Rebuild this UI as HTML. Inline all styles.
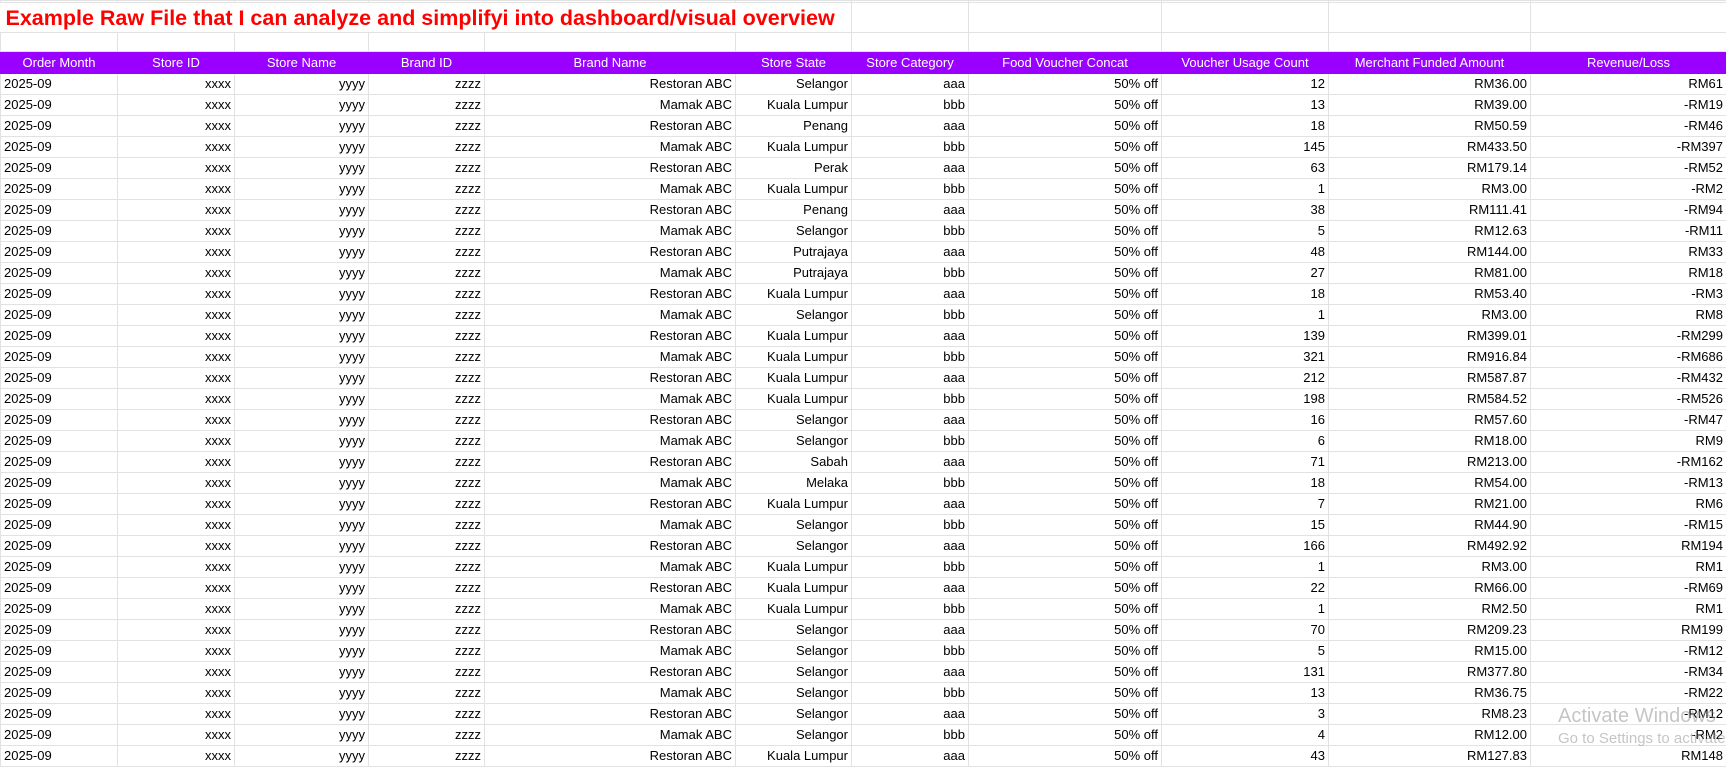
<!DOCTYPE html>
<html><head><meta charset="utf-8"><style>
html,body{margin:0;padding:0;background:#fff;width:1726px;height:755px;overflow:hidden;font-family:"Liberation Sans",Arial,sans-serif;}
table{border-collapse:collapse;table-layout:fixed;width:1726px;position:absolute;left:0;top:0;}
td{border:1px solid #e2e2e2;padding:0 3px;font-size:13px;color:#000;white-space:nowrap;overflow:hidden;text-align:right;height:20px;line-height:20px;}
td:first-child{text-align:left;}
tr.top td{height:1px;line-height:1px;padding:0;}
tr.title td{height:29px;border-left:none;border-right:none;}
tr.title td.t{overflow:visible;text-align:left;font-weight:bold;color:#ff0000;font-size:21.5px;padding-left:5px;}
tr.title td.v{border-left:1px solid #e2e2e2;}
tr.blank td{height:18px;}
tr.hd td{background:#9900ff;color:#fff;text-align:center;height:21px;line-height:21px;border-color:#9900ff;}
.wm{position:absolute;left:1558px;color:rgba(150,150,150,0.55);white-space:nowrap;}
</style></head><body>
<table>
<colgroup><col style="width:117px"><col style="width:117px"><col style="width:134px"><col style="width:116px"><col style="width:251px"><col style="width:116px"><col style="width:117px"><col style="width:193px"><col style="width:167px"><col style="width:202px"><col style="width:196px"></colgroup>
<tr class="top"><td></td><td></td><td></td><td></td><td></td><td></td><td></td><td></td><td></td><td></td><td></td></tr>
<tr class="title"><td class="t">Example Raw File that I can analyze and simplifyi into dashboard/visual overview</td><td></td><td></td><td></td><td></td><td></td><td class="v"></td><td class="v"></td><td class="v"></td><td class="v"></td><td class="v"></td></tr>
<tr class="blank"><td></td><td></td><td></td><td></td><td></td><td></td><td></td><td></td><td></td><td></td><td></td></tr>
<tr class="hd"><td>Order Month</td><td>Store ID</td><td>Store Name</td><td>Brand ID</td><td>Brand Name</td><td>Store State</td><td>Store Category</td><td>Food Voucher Concat</td><td>Voucher Usage Count</td><td>Merchant Funded Amount</td><td>Revenue/Loss</td></tr>
<tr><td>2025-09</td><td>xxxx</td><td>yyyy</td><td>zzzz</td><td>Restoran ABC</td><td>Selangor</td><td>aaa</td><td>50% off</td><td>12</td><td>RM36.00</td><td>RM61</td></tr>
<tr><td>2025-09</td><td>xxxx</td><td>yyyy</td><td>zzzz</td><td>Mamak ABC</td><td>Kuala Lumpur</td><td>bbb</td><td>50% off</td><td>13</td><td>RM39.00</td><td>-RM19</td></tr>
<tr><td>2025-09</td><td>xxxx</td><td>yyyy</td><td>zzzz</td><td>Restoran ABC</td><td>Penang</td><td>aaa</td><td>50% off</td><td>18</td><td>RM50.59</td><td>-RM46</td></tr>
<tr><td>2025-09</td><td>xxxx</td><td>yyyy</td><td>zzzz</td><td>Mamak ABC</td><td>Kuala Lumpur</td><td>bbb</td><td>50% off</td><td>145</td><td>RM433.50</td><td>-RM397</td></tr>
<tr><td>2025-09</td><td>xxxx</td><td>yyyy</td><td>zzzz</td><td>Restoran ABC</td><td>Perak</td><td>aaa</td><td>50% off</td><td>63</td><td>RM179.14</td><td>-RM52</td></tr>
<tr><td>2025-09</td><td>xxxx</td><td>yyyy</td><td>zzzz</td><td>Mamak ABC</td><td>Kuala Lumpur</td><td>bbb</td><td>50% off</td><td>1</td><td>RM3.00</td><td>-RM2</td></tr>
<tr><td>2025-09</td><td>xxxx</td><td>yyyy</td><td>zzzz</td><td>Restoran ABC</td><td>Penang</td><td>aaa</td><td>50% off</td><td>38</td><td>RM111.41</td><td>-RM94</td></tr>
<tr><td>2025-09</td><td>xxxx</td><td>yyyy</td><td>zzzz</td><td>Mamak ABC</td><td>Selangor</td><td>bbb</td><td>50% off</td><td>5</td><td>RM12.63</td><td>-RM11</td></tr>
<tr><td>2025-09</td><td>xxxx</td><td>yyyy</td><td>zzzz</td><td>Restoran ABC</td><td>Putrajaya</td><td>aaa</td><td>50% off</td><td>48</td><td>RM144.00</td><td>RM33</td></tr>
<tr><td>2025-09</td><td>xxxx</td><td>yyyy</td><td>zzzz</td><td>Mamak ABC</td><td>Putrajaya</td><td>bbb</td><td>50% off</td><td>27</td><td>RM81.00</td><td>RM18</td></tr>
<tr><td>2025-09</td><td>xxxx</td><td>yyyy</td><td>zzzz</td><td>Restoran ABC</td><td>Kuala Lumpur</td><td>aaa</td><td>50% off</td><td>18</td><td>RM53.40</td><td>-RM3</td></tr>
<tr><td>2025-09</td><td>xxxx</td><td>yyyy</td><td>zzzz</td><td>Mamak ABC</td><td>Selangor</td><td>bbb</td><td>50% off</td><td>1</td><td>RM3.00</td><td>RM8</td></tr>
<tr><td>2025-09</td><td>xxxx</td><td>yyyy</td><td>zzzz</td><td>Restoran ABC</td><td>Kuala Lumpur</td><td>aaa</td><td>50% off</td><td>139</td><td>RM399.01</td><td>-RM299</td></tr>
<tr><td>2025-09</td><td>xxxx</td><td>yyyy</td><td>zzzz</td><td>Mamak ABC</td><td>Kuala Lumpur</td><td>bbb</td><td>50% off</td><td>321</td><td>RM916.84</td><td>-RM686</td></tr>
<tr><td>2025-09</td><td>xxxx</td><td>yyyy</td><td>zzzz</td><td>Restoran ABC</td><td>Kuala Lumpur</td><td>aaa</td><td>50% off</td><td>212</td><td>RM587.87</td><td>-RM432</td></tr>
<tr><td>2025-09</td><td>xxxx</td><td>yyyy</td><td>zzzz</td><td>Mamak ABC</td><td>Kuala Lumpur</td><td>bbb</td><td>50% off</td><td>198</td><td>RM584.52</td><td>-RM526</td></tr>
<tr><td>2025-09</td><td>xxxx</td><td>yyyy</td><td>zzzz</td><td>Restoran ABC</td><td>Selangor</td><td>aaa</td><td>50% off</td><td>16</td><td>RM57.60</td><td>-RM47</td></tr>
<tr><td>2025-09</td><td>xxxx</td><td>yyyy</td><td>zzzz</td><td>Mamak ABC</td><td>Selangor</td><td>bbb</td><td>50% off</td><td>6</td><td>RM18.00</td><td>RM9</td></tr>
<tr><td>2025-09</td><td>xxxx</td><td>yyyy</td><td>zzzz</td><td>Restoran ABC</td><td>Sabah</td><td>aaa</td><td>50% off</td><td>71</td><td>RM213.00</td><td>-RM162</td></tr>
<tr><td>2025-09</td><td>xxxx</td><td>yyyy</td><td>zzzz</td><td>Mamak ABC</td><td>Melaka</td><td>bbb</td><td>50% off</td><td>18</td><td>RM54.00</td><td>-RM13</td></tr>
<tr><td>2025-09</td><td>xxxx</td><td>yyyy</td><td>zzzz</td><td>Restoran ABC</td><td>Kuala Lumpur</td><td>aaa</td><td>50% off</td><td>7</td><td>RM21.00</td><td>RM6</td></tr>
<tr><td>2025-09</td><td>xxxx</td><td>yyyy</td><td>zzzz</td><td>Mamak ABC</td><td>Selangor</td><td>bbb</td><td>50% off</td><td>15</td><td>RM44.90</td><td>-RM15</td></tr>
<tr><td>2025-09</td><td>xxxx</td><td>yyyy</td><td>zzzz</td><td>Restoran ABC</td><td>Selangor</td><td>aaa</td><td>50% off</td><td>166</td><td>RM492.92</td><td>RM194</td></tr>
<tr><td>2025-09</td><td>xxxx</td><td>yyyy</td><td>zzzz</td><td>Mamak ABC</td><td>Kuala Lumpur</td><td>bbb</td><td>50% off</td><td>1</td><td>RM3.00</td><td>RM1</td></tr>
<tr><td>2025-09</td><td>xxxx</td><td>yyyy</td><td>zzzz</td><td>Restoran ABC</td><td>Kuala Lumpur</td><td>aaa</td><td>50% off</td><td>22</td><td>RM66.00</td><td>-RM69</td></tr>
<tr><td>2025-09</td><td>xxxx</td><td>yyyy</td><td>zzzz</td><td>Mamak ABC</td><td>Kuala Lumpur</td><td>bbb</td><td>50% off</td><td>1</td><td>RM2.50</td><td>RM1</td></tr>
<tr><td>2025-09</td><td>xxxx</td><td>yyyy</td><td>zzzz</td><td>Restoran ABC</td><td>Selangor</td><td>aaa</td><td>50% off</td><td>70</td><td>RM209.23</td><td>RM199</td></tr>
<tr><td>2025-09</td><td>xxxx</td><td>yyyy</td><td>zzzz</td><td>Mamak ABC</td><td>Selangor</td><td>bbb</td><td>50% off</td><td>5</td><td>RM15.00</td><td>-RM12</td></tr>
<tr><td>2025-09</td><td>xxxx</td><td>yyyy</td><td>zzzz</td><td>Restoran ABC</td><td>Selangor</td><td>aaa</td><td>50% off</td><td>131</td><td>RM377.80</td><td>-RM34</td></tr>
<tr><td>2025-09</td><td>xxxx</td><td>yyyy</td><td>zzzz</td><td>Mamak ABC</td><td>Selangor</td><td>bbb</td><td>50% off</td><td>13</td><td>RM36.75</td><td>-RM22</td></tr>
<tr><td>2025-09</td><td>xxxx</td><td>yyyy</td><td>zzzz</td><td>Restoran ABC</td><td>Selangor</td><td>aaa</td><td>50% off</td><td>3</td><td>RM8.23</td><td>-RM12</td></tr>
<tr><td>2025-09</td><td>xxxx</td><td>yyyy</td><td>zzzz</td><td>Mamak ABC</td><td>Selangor</td><td>bbb</td><td>50% off</td><td>4</td><td>RM12.00</td><td>-RM2</td></tr>
<tr><td>2025-09</td><td>xxxx</td><td>yyyy</td><td>zzzz</td><td>Restoran ABC</td><td>Kuala Lumpur</td><td>aaa</td><td>50% off</td><td>43</td><td>RM127.83</td><td>RM148</td></tr>
</table>
<div class="wm" style="top:705px;font-size:20px;">Activate Windows</div>
<div class="wm" style="top:730px;font-size:15px;">Go to Settings to activate Windows.</div>
</body></html>
